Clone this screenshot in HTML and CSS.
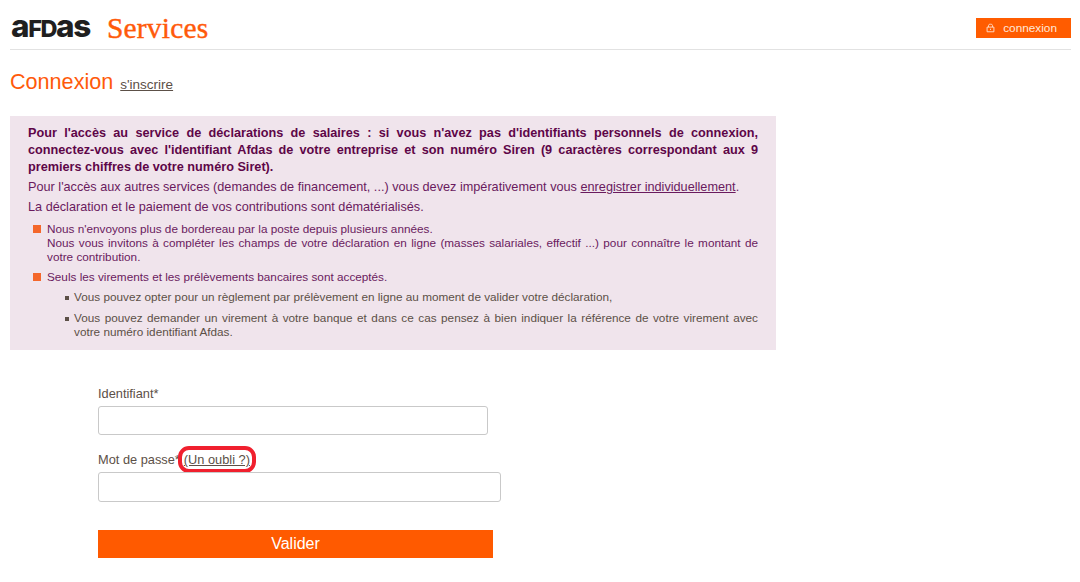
FILE: index.html
```html
<!DOCTYPE html>
<html lang="fr">
<head>
<meta charset="utf-8">
<title>Afdas Services - Connexion</title>
<link rel="stylesheet" href="styles.css">
</head>
<body>
<header class="topbar">
  <div class="brand">
    <span class="logo"><span class="lc">a</span>FD<span class="lc">as</span></span>
    <span class="services">Services</span>
  </div>
  <a class="login-btn" href="#">
    <svg class="lock" viewBox="0 0 10 10" width="9" height="10" aria-hidden="true"><path d="M2.8 4V2.2C2.8 1.2 3.6.8 5 .8s2.2.4 2.2 1.4V4M1.2 4h7.6v5.2H1.2zM5 5.8v1.4" fill="none" stroke="#ffe3d2" stroke-width="1"/></svg>
    connexion
  </a>
</header>
<div class="title-row">
  <h1>Connexion</h1>
  <a class="signup" href="#">s'inscrire</a>
</div>
<section class="notice">
  <p class="strong">Pour l'accès au service de déclarations de salaires : si vous n'avez pas d'identifiants personnels de connexion, connectez-vous avec l'identifiant Afdas de votre entreprise et son numéro Siren (9 caractères correspondant aux 9 premiers chiffres de votre numéro Siret).</p>
  <p class="plain">Pour l'accès aux autres services (demandes de financement, ...) vous devez impérativement vous <a href="#">enregistrer individuellement</a>.</p>
  <p class="plain">La déclaration et le paiement de vos contributions sont dématérialisés.</p>
  <ul class="main-list">
    <li>Nous n'envoyons plus de bordereau par la poste depuis plusieurs années.<br>Nous vous invitons à compléter les champs de votre déclaration en ligne (masses salariales, effectif ...) pour connaître le montant de votre contribution.</li>
    <li>Seuls les virements et les prélèvements bancaires sont acceptés.
      <ul class="sub-list">
        <li>Vous pouvez opter pour un règlement par prélèvement en ligne au moment de valider votre déclaration,</li>
        <li>Vous pouvez demander un virement à votre banque et dans ce cas pensez à bien indiquer la référence de votre virement avec votre numéro identifiant Afdas.</li>
      </ul>
    </li>
  </ul>
</section>
<form class="login-form">
  <label class="field-label" for="id">Identifiant*</label>
  <input class="input input-id" id="id" type="text">
  <div class="field-label label-pass"><label for="pw">Mot de passe*</label><a class="forgot" href="#">(Un oubli ?)</a></div>
  <input class="input input-pw" id="pw" type="password">
  <button class="submit" type="button">Valider</button>
</form>
</body>
</html>
```
FILE: styles.css
```css
* { box-sizing: border-box; }
html, body { margin: 0; padding: 0; background: #fff; }
body { font-family: "Liberation Sans", Arial, sans-serif; color: #5c5047; height: 582px; overflow: hidden; padding: 0 9px 0 10px; }

.topbar { display: flex; justify-content: space-between; align-items: flex-start; height: 50px; border-bottom: 1px solid #e2e2e2; padding-top: 10px; }
.brand { display: flex; align-items: center; height: 38px; }
.logo { font-family: Inter, sans-serif; font-weight: 800; font-size: 23.5px; color: #1f1f1f; letter-spacing: -1.4px; margin-left: 1px; line-height: 38px; }
.lc { font-size: 31.5px; line-height: 20px; }
.services { font-family: "Liberation Serif", serif; font-size: 29.5px; color: #ff5a0a; margin-left: 17px; letter-spacing: 0.2px; -webkit-text-stroke: 0.4px #ff5a0a; line-height: 36px; padding-bottom: 2px; }
.login-btn { display: flex; align-items: center; justify-content: flex-end; gap: 8px; width: 95px; height: 20px; margin-top: 8px; padding-right: 14px; background: #ff5c00; color: #ffe8da; font-size: 11.8px; text-decoration: none; }

.title-row { display: flex; align-items: baseline; gap: 7px; margin-top: 18px; height: 28px; }
h1 { margin: 0; font-size: 21.6px; font-weight: 400; color: #ff5a0a; line-height: 28px; }
.signup { font-size: 13.5px; color: #5c5047; }

.notice { width: 766px; height: 234px; margin-top: 20px; padding: 9px 18px 0; background: #f0e4ec; color: #6a1a5e; font-size: 11.75px; line-height: 14px; text-align: justify; }
.notice p { margin: 0; font-size: 12.7px; }
.notice a { color: #6a1a5e; }
.strong { font-weight: 700; color: #5e0648; line-height: 17px; }
.plain { margin-top: 4px !important; line-height: 15px !important; }
.plain + .plain { margin-top: 5px !important; }
.main-list { list-style: none; margin: 7px 0 0; padding: 0 0 0 19px; }
.main-list > li { position: relative; margin-bottom: 6px; }
.main-list > li::before { content: ""; position: absolute; left: -14px; top: 3px; width: 8px; height: 8px; background: #f4672b; }
.sub-list { list-style: none; margin: 0; padding: 6px 0 0 27px; color: #5c5047; }
.sub-list li { position: relative; margin-bottom: 7px; }
.sub-list li::before { content: ""; position: absolute; left: -9px; top: 6px; width: 4px; height: 4px; background: #5c5047; }

.login-form { display: flex; flex-direction: column; align-items: flex-start; padding: 37px 0 0 88px; }
.field-label { font-size: 12.8px; line-height: 14px; color: #5c5047; }
.input { display: block; height: 29px; margin-top: 5px; background: #fff; border: 1px solid #c9c9c9; border-radius: 3px; }
.input-id { width: 390px; }
.input-pw { width: 403px; height: 30px; margin-top: 5px; }
.label-pass { margin-top: 18px; }
.forgot { color: #5c5047; margin-left: 1px; padding: 3px 3px; border-radius: 8px; outline: 4px solid #f0202e; outline-offset: -1px; }
.submit { width: 395px; height: 28px; margin-top: 28px; background: #ff5a00; color: #fff; border: 0; font-family: "Liberation Sans", Arial, sans-serif; font-size: 16px; }
```
